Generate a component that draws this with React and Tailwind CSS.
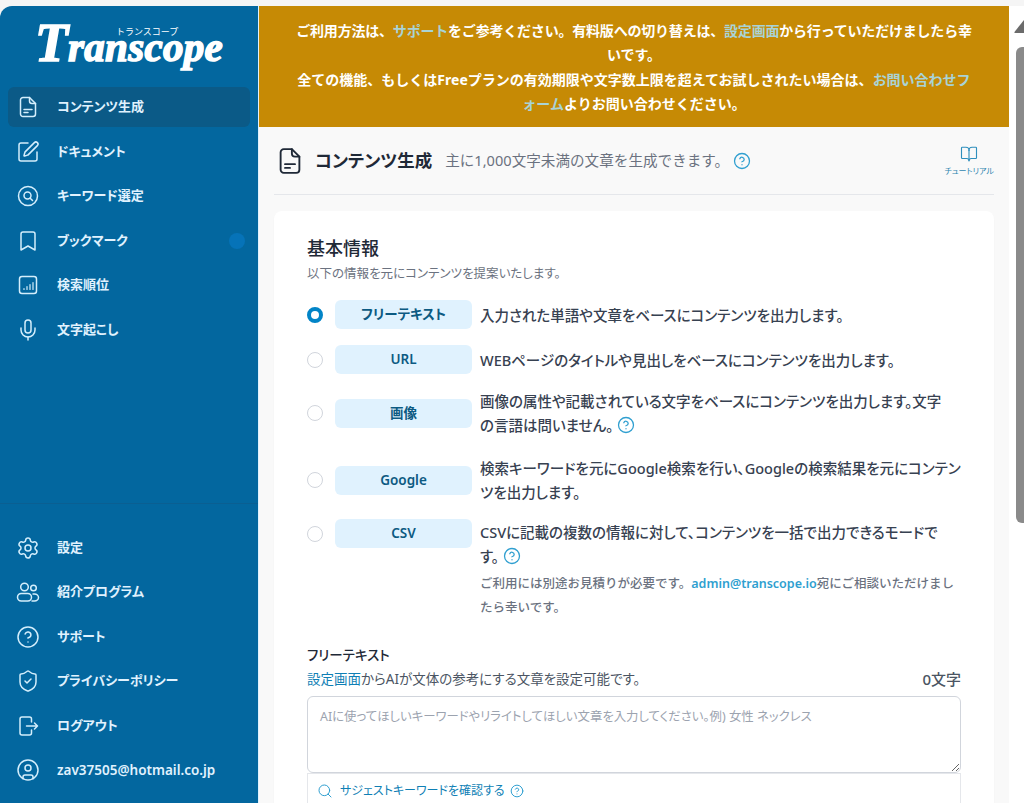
import { Settings, CircleHelp, ShieldCheck, BookOpen, Search, Bookmark, Mic, SquarePen, CircleUser } from 'lucide-react';

const DocIcon = ({ className }) => (
  <svg viewBox="0 0 24 24" fill="none" stroke="currentColor" strokeWidth="1.5" strokeLinecap="round" strokeLinejoin="round" className={className}>
    <path d="M13.5 2.5H7a2.5 2.5 0 0 0-2.500 2.500v14A2.500 2.500 0 0 0 7 21.500h10a2.500 2.500 0 0 0 2.500-2.500V8.500z" />
    <path d="M13.500 2.500v3.500a2.500 2.500 0 0 0 2.500 2.500h3.500" />
    <path d="M8 14.500h8M8 17.500h4" />
  </svg>
);

const SearchCircle = ({ className }) => (
  <svg viewBox="0 0 24 24" fill="none" stroke="currentColor" strokeWidth="1.5" strokeLinecap="round" className={className}>
    <circle cx="12" cy="12" r="9.500" />
    <circle cx="11.500" cy="11.500" r="3.500" />
    <path d="M14.200 14.200l2.300 2.300" />
  </svg>
);

const ChartIcon = ({ className }) => (
  <svg viewBox="0 0 24 24" fill="none" stroke="currentColor" strokeWidth="1.5" strokeLinecap="round" className={className}>
    <rect x="3.500" y="3.500" width="17" height="17" rx="2.500" />
    <path d="M8 16.500v-1M11 16.500v-3M14 16.500v-5M17 16.500v-7" strokeWidth="1.200" />
  </svg>
);

const UsersIcon = ({ className }) => (
  <svg viewBox="0 0 24 24" fill="none" stroke="currentColor" strokeWidth="1.5" className={className}>
    <circle cx="8.500" cy="7" r="3.800" />
    <circle cx="17.500" cy="8" r="2.800" />
    <rect x="1.500" y="13.500" width="14" height="7.500" rx="3.750" />
    <path d="M17 14h1.500a4 3.500 0 0 1 0 7H16" strokeLinecap="round" />
  </svg>
);

const LogoutIcon = ({ className }) => (
  <svg viewBox="0 0 24 24" fill="none" stroke="currentColor" strokeWidth="1.5" strokeLinecap="round" strokeLinejoin="round" className={className}>
    <path d="M15.500 8V5a2 2 0 0 0-2-2H6a2 2 0 0 0-2 2v14a2 2 0 0 0 2 2h7.500a2 2 0 0 0 2-2v-3" />
    <path d="M10.500 12h11M18.500 9l3 3-3 3" />
  </svg>
);

const Help = ({ className }) => <CircleHelp strokeWidth={1.7} className={`inline-block align-[-3px] ${className}`} />;

const topNav = [
  { label: 'コンテンツ生成', Icon: DocIcon, active: true },
  { label: 'ドキュメント', Icon: SquarePen },
  { label: 'キーワード選定', Icon: SearchCircle },
  { label: 'ブックマーク', Icon: Bookmark, dot: true },
  { label: '検索順位', Icon: ChartIcon },
  { label: '文字起こし', Icon: Mic },
];

const bottomNav = [
  { label: '設定', Icon: Settings },
  { label: '紹介プログラム', Icon: UsersIcon },
  { label: 'サポート', Icon: CircleHelp },
  { label: 'プライバシーポリシー', Icon: ShieldCheck },
  { label: 'ログアウト', Icon: LogoutIcon },
  { label: 'zav37505@hotmail.co.jp', Icon: CircleUser, email: true },
];

const NavItem = ({ item }) => (
  <div
    className={`flex items-center h-10 px-2 rounded-md ${item.active ? 'bg-[#0b5a87]' : ''}`}
  >
    <item.Icon strokeWidth={1.5} className="w-6 h-6 text-[#d4eefc] shrink-0" />
    <span className={`ml-[17px] font-semibold text-[#e0f2fe] [font-feature-settings:'palt'] ${item.email ? 'text-[13.500px]' : 'text-[13px]'}`}>{item.label}</span>
    {item.dot && <span className="ml-auto mr-[-3px] w-4 h-4 rounded-full bg-[#0673b8]" />}
  </div>
);

const Radio = ({ checked }) =>
  checked ? (
    <span className="w-4 h-4 rounded-full border-[4.5px] border-[#0284c7] bg-white shrink-0" />
  ) : (
    <span className="w-4 h-4 rounded-full border border-gray-300 bg-white shrink-0" />
  );

const Option = ({ label, checked, start, className = '', children }) => (
  <div className={`flex gap-2 ${start ? 'items-start' : 'items-center'} ${className}`}>
    <div className={`flex items-center shrink-0 ${start ? 'h-[29px]' : ''}`}>
      <Radio checked={checked} />
      <div className="ml-3 w-[137px] h-[29px] flex items-center justify-center rounded-md bg-[#e0f2fe] text-[13.500px] font-semibold text-[#0c5a82] [font-feature-settings:'palt']">
        {label}
      </div>
    </div>
    <div className={`flex-1 text-[14.500px] leading-6 font-medium text-[#374151] [font-feature-settings:'palt'] ${start ? 'pt-[1px]' : ''}`}>{children}</div>
  </div>
);

export default function App() {
  return (
    <div className="h-[803px] overflow-hidden flex flex-col bg-[#f5f5f5] font-['Noto_Sans','Noto_Sans_CJK_JP',sans-serif]">
      <div className="h-[6px] shrink-0" />
      <div className="flex flex-1 min-h-0">
        {/* Sidebar */}
        <aside className="w-[258px] shrink-0 flex flex-col bg-[#03679f] rounded-tl-xl">
          <div className="h-[81px] relative shrink-0 pl-[35px] pt-[12px]">
            <span className="absolute left-[116px] top-[20px] text-[9px] leading-3 text-white">トランスコープ</span>
            <div className="font-['Liberation_Serif',serif] italic font-bold text-white whitespace-nowrap leading-[50px] [-webkit-text-stroke:1.5px_white]">
              <span className="text-[54px]">T</span>
              <span className="text-[41px] tracking-[0.3px]">ranscope</span>
            </div>
          </div>
          <nav className="flex flex-col gap-[4.5px] px-2">
            {topNav.map((item) => (
              <NavItem key={item.label} item={item} />
            ))}
          </nav>
          <nav className="mt-auto flex flex-col gap-[4.5px] px-2 pt-6 pb-[13px] border-t border-[#0a5f92]">
            {bottomNav.map((item) => (
              <NavItem key={item.label} item={item} />
            ))}
          </nav>
        </aside>

        {/* Main */}
        <main className="flex-1 min-w-0 bg-[#f9f9f9] border-l border-sky-100">
          <div className="bg-[#c68a05] px-4 pt-[13px] pb-[11px] text-center text-[14px] leading-[24.250px] font-bold text-white">
            <p>
              <span className="tracking-[-0.2px]">
                ご利用方法は、<span className="text-[#a9d3d6]">サポート</span>をご参考ください。有料版への切り替えは、
                <span className="text-[#a9d3d6]">設定画面</span>から行っていただけましたら幸
              </span>
              <br />
              いです。
            </p>
            <p>
              全ての機能、もしくはFreeプランの有効期限や文字数上限を超えてお試しされたい場合は、
              <span className="text-[#a9d3d6]">お問い合わせフ</span>
              <br />
              <span className="text-[#a9d3d6]">ォーム</span>よりお問い合わせください。
            </p>
          </div>

          <div className="px-[15px]">
            <div className="h-[68px] flex items-center border-b border-gray-200">
              <DocIcon className="w-[30px] h-[30px] ml-[1px] text-[#1f2937]" />
              <h1 className="ml-[10px] text-[17.500px] font-bold text-[#1f2937] [font-feature-settings:'palt']">コンテンツ生成</h1>
              <span className="ml-[13px] text-[14.600px] text-[#6b7280]">主に1,000文字未満の文章を生成できます。</span>
              <Help className="ml-1 w-[18px] h-[18px] text-[#2f9fd0]" />
              <div className="ml-auto flex flex-col items-center">
                <BookOpen strokeWidth={1.5} className="w-[18px] h-[18px] text-[#2f8fbd]" />
                <span className="mt-[2px] text-[8px] leading-3 text-[#2f86b0] [font-feature-settings:'palt']">チュートリアル</span>
              </div>
            </div>

            <section className="mt-4 bg-white rounded-lg px-[33px] pt-[25px] pb-10 shadow-[0_1px_2px_rgba(0,0,0,0.03)]">
              <h2 className="text-[18px] leading-6 font-medium text-[#1f2937]">基本情報</h2>
              <p className="mt-[4px] text-[12.500px] leading-5 text-[#6b7280] [font-feature-settings:'palt']">以下の情報を元にコンテンツを提案いたします。</p>

              <div className="mt-[16px] flex flex-col">
                <Option label="フリーテキスト" checked>入力された単語や文章をベースにコンテンツを出力します。</Option>
                <Option label="URL" className="mt-4">WEBページのタイトルや見出しをベースにコンテンツを出力します。</Option>
                <Option label="画像" className="mt-[15px]">
                  画像の属性や記載されている文字をベースにコンテンツを出力します。文字
                  <br />
                  の言語は問いません。
                  <Help className="ml-1 w-[18px] h-[18px] text-[#2f9fd0]" />
                </Option>
                <Option label="Google" className="mt-[19px]">検索キーワードを元にGoogle検索を行い、Googleの検索結果を元にコンテンツを出力します。</Option>
                <Option label="CSV" start className="mt-[15px]">
                  CSVに記載の複数の情報に対して、コンテンツを一括で出力できるモードで
                  <br />
                  す。
                  <Help className="ml-1 w-[18px] h-[18px] text-[#2f9fd0]" />
                  <p className="mt-[4px] text-[12.500px] leading-6 text-[#6b7280] [font-feature-settings:normal]">
                    ご利用には別途お見積りが必要です。<span className="text-[#2f9fd0] font-semibold">admin@transcope.io</span>宛にご相談いただけましたら幸いです。
                  </p>
                </Option>
              </div>

              <h3 className="mt-[23px] text-[13.500px] leading-6 font-medium text-[#1f2937] [font-feature-settings:'palt']">フリーテキスト</h3>
              <div className="flex items-center justify-between h-6">
                <p className="text-[13.500px] text-[#4b5563] [font-feature-settings:'palt']">
                  <span className="text-[#0f7fb5]">設定画面</span>からAIが文体の参考にする文章を設定可能です。
                </p>
                <span className="text-[15px] font-medium text-[#4b5563]">0文字</span>
              </div>
              <textarea
                readOnly
                placeholder="AIに使ってほしいキーワードやリライトしてほしい文章を入力してください。例) 女性 ネックレス"
                className="mt-[5px] block w-full h-[77px] rounded-md border border-gray-300 px-3 py-[10px] text-[12.400px] leading-5 placeholder:text-[#9ca3af] [font-feature-settings:'palt'] outline-none"
              />
              <div className="border-x border-t border-gray-200 h-[34px] flex items-center px-[9px] text-[12px] text-[#0f7fb5] [font-feature-settings:'palt']">
                <Search strokeWidth={1.5} className="w-4 h-4 text-[#2f9fd0]" />
                <span className="ml-[7px]">サジェストキーワードを確認する</span>
                <Help className="ml-[5px] w-[14px] h-[14px] text-[#2f9fd0]" />
              </div>
            </section>
          </div>
        </main>

        {/* Scrollbar */}
        <div className="w-[15px] shrink-0 bg-white flex flex-col items-end pt-[14px]">
          <svg viewBox="0 0 10 13" className="w-[10px] h-[13px] text-[#6b6b6b]" fill="currentColor">
            <path d="M10 0v13H1Q0 13 0.500 12z" />
          </svg>
          <div className="mt-[14px] w-2 h-[476px] rounded-l-md bg-[#8a8a8a]" />
        </div>
      </div>
    </div>
  );
}
